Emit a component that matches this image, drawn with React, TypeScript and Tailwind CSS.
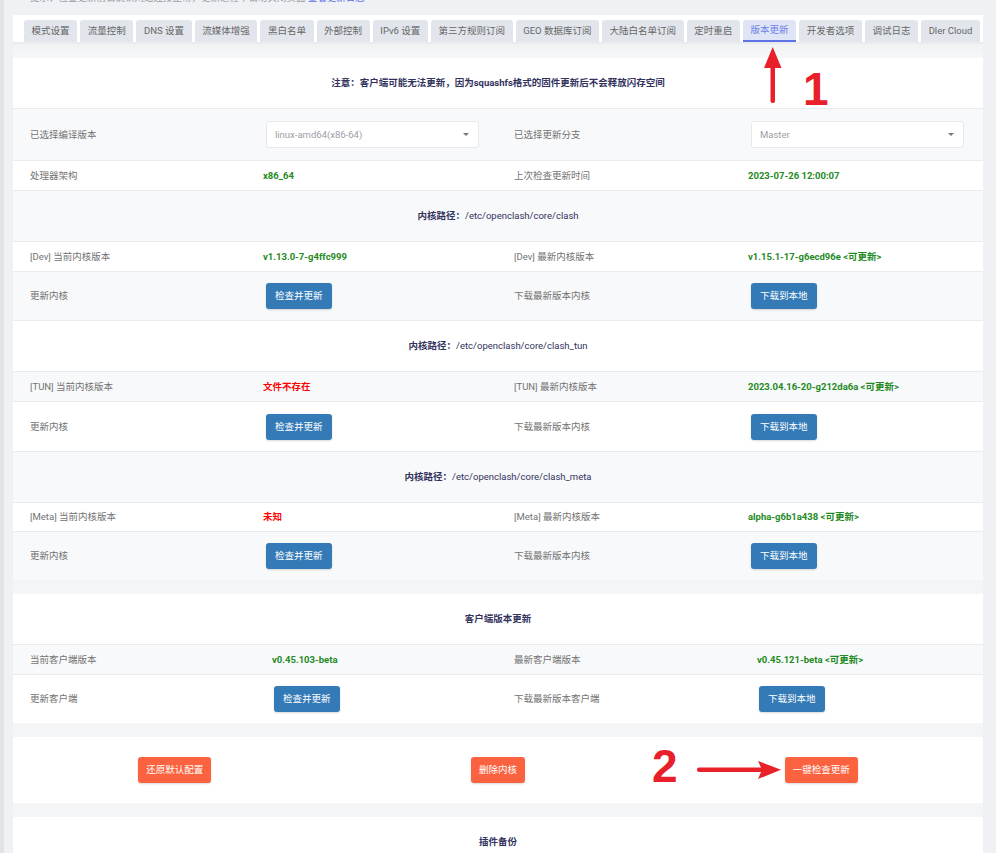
import React from "react";

const tabs = [
  "模式设置",
  "流量控制",
  "DNS 设置",
  "流媒体增强",
  "黑白名单",
  "外部控制",
  "IPv6 设置",
  "第三方规则订阅",
  "GEO 数据库订阅",
  "大陆白名单订阅",
  "定时重启",
  "版本更新",
  "开发者选项",
  "调试日志",
  "Dler Cloud",
];

const KGRID = "grid-cols-[250px_234px_251px_1fr]";
const CGRID = "grid-cols-[259px_225px_260px_1fr]";

function Label({ children }: { children: React.ReactNode }) {
  return <span className="pl-[17px] text-[#737373]">{children}</span>;
}

function Green({ children }: { children: React.ReactNode }) {
  return <span className="font-bold text-[#248a24]">{children}</span>;
}

function Red({ children }: { children: React.ReactNode }) {
  return <span className="font-bold text-[#ff0000]">{children}</span>;
}

function BlueBtn({ children, offset }: { children: React.ReactNode; offset: string }) {
  return (
    <button
      className={`${offset} h-[26px] rounded-[3px] bg-[#337ab7] px-[9px] text-white shadow-[0_1px_2px_rgba(0,0,0,0.15)]`}
    >
      {children}
    </button>
  );
}

function OrangeBtn({ children }: { children: React.ReactNode }) {
  return (
    <button className="h-[26px] rounded-[3px] bg-[#fb6340] px-[8px] text-white shadow-[0_1px_2px_rgba(0,0,0,0.15)]">
      {children}
    </button>
  );
}

function Select({ value }: { value: string }) {
  return (
    <div className="ml-[3px] flex h-[27px] w-[213px] items-center justify-between rounded-[3px] border border-[#e6e8ec] bg-white pl-[8px] pr-[9px] text-[#9aa0a8]">
      <span>{value}</span>
      <svg width="6" height="3" viewBox="0 0 6 3">
        <path d="M0 0h6L3 3z" fill="#777" />
      </svg>
    </div>
  );
}

function Row({
  gray,
  h,
  grid,
  cells,
}: {
  gray?: boolean;
  h: string;
  grid: string;
  cells: React.ReactNode[];
}) {
  return (
    <div
      className={`grid ${grid} ${h} items-center border-t border-[#e9ecef] ${
        gray ? "bg-[#f8f9fa]" : "bg-white"
      }`}
    >
      {cells.map((c, i) => (
        <div key={i} className="flex items-center">
          {c}
        </div>
      ))}
    </div>
  );
}

function Header({ gray, h, children }: { gray?: boolean; h: string; children: React.ReactNode }) {
  return (
    <div
      className={`flex ${h} items-center justify-center border-t border-[#e9ecef] text-[#32325d] ${
        gray ? "bg-[#f8f9fa]" : "bg-white"
      }`}
    >
      {children}
    </div>
  );
}

function PathHeader({ gray, path }: { gray?: boolean; path: string }) {
  return (
    <Header gray={gray} h="h-[51px]">
      <span className="font-bold">内核路径：</span>
      <span>{path}</span>
    </Header>
  );
}

export default function App() {
  return (
    <div
      className="relative min-h-[853px] overflow-hidden bg-[#eff1f4] px-[13px] text-[9.5px] leading-none"
      style={{ fontFamily: '"Roboto", "Noto Sans CJK SC", sans-serif' }}
    >
      <div className="pointer-events-none absolute left-0 top-0 h-full w-[4px] bg-[#e1e3e7]" />

      {/* top hint line, mostly scrolled out */}
      <div className="h-[15px] overflow-hidden">
        <div className="-mt-[7px] pl-[17px] text-[#9a9ea6]">
          提示：检查更新前请确认网络连接正常，更新过程中请勿关闭页面 <span className="text-[#5e72e4]">查看更新日志</span>
        </div>
      </div>

      <div className="bg-[#f4f5f7]">
        {/* tabs */}
        <div className="flex gap-[3px] overflow-hidden whitespace-nowrap bg-white pl-[11px] pt-[5px]">
          {tabs.map((t) => (
            <div
              key={t}
              className={
                t === "版本更新"
                  ? "flex h-[22px] shrink-0 items-center rounded-t-[3px] border-b-2 border-[#5e72e4] bg-[#dfe4f6] px-[7.6px] text-[#6f83e6]"
                  : "flex h-[22px] shrink-0 items-center rounded-t-[3px] bg-[#e2e6ec] px-[7.6px] text-[#666]"
              }
            >
              {t}
            </div>
          ))}
        </div>
        <div className="h-[2px] bg-[#e9ecef]" />
        <div className="h-[14px] bg-gradient-to-b from-[#f1f2f4] to-[#f6f7f9]" />

        {/* kernel section */}
        <div className="bg-white">
          <div className="flex h-[50px] items-center justify-center font-bold text-[#32325d]">
            注意：客户端可能无法更新，因为squashfs格式的固件更新后不会释放闪存空间
          </div>
          <Row
            gray
            h="h-[52px]"
            grid={KGRID}
            cells={[
              <Label>已选择编译版本</Label>,
              <Select value="linux-amd64(x86-64)" />,
              <Label>已选择更新分支</Label>,
              <Select value="Master" />,
            ]}
          />
          <Row
            h="h-[30px]"
            grid={KGRID}
            cells={[
              <Label>处理器架构</Label>,
              <Green>x86_64</Green>,
              <Label>上次检查更新时间</Label>,
              <Green>2023-07-26 12:00:07</Green>,
            ]}
          />
          <PathHeader gray path="/etc/openclash/core/clash" />
          <Row
            h="h-[30px]"
            grid={KGRID}
            cells={[
              <Label>[Dev] 当前内核版本</Label>,
              <Green>v1.13.0-7-g4ffc999</Green>,
              <Label>[Dev] 最新内核版本</Label>,
              <Green>v1.15.1-17-g6ecd96e &lt;可更新&gt;</Green>,
            ]}
          />
          <Row
            gray
            h="h-[49px]"
            grid={KGRID}
            cells={[
              <Label>更新内核</Label>,
              <BlueBtn offset="ml-[3px]">检查并更新</BlueBtn>,
              <Label>下载最新版本内核</Label>,
              <BlueBtn offset="ml-[3px]">下载到本地</BlueBtn>,
            ]}
          />
          <PathHeader path="/etc/openclash/core/clash_tun" />
          <Row
            gray
            h="h-[30px]"
            grid={KGRID}
            cells={[
              <Label>[TUN] 当前内核版本</Label>,
              <Red>文件不存在</Red>,
              <Label>[TUN] 最新内核版本</Label>,
              <Green>2023.04.16-20-g212da6a &lt;可更新&gt;</Green>,
            ]}
          />
          <Row
            h="h-[50px]"
            grid={KGRID}
            cells={[
              <Label>更新内核</Label>,
              <BlueBtn offset="ml-[3px]">检查并更新</BlueBtn>,
              <Label>下载最新版本内核</Label>,
              <BlueBtn offset="ml-[3px]">下载到本地</BlueBtn>,
            ]}
          />
          <PathHeader gray path="/etc/openclash/core/clash_meta" />
          <Row
            h="h-[29px]"
            grid={KGRID}
            cells={[
              <Label>[Meta] 当前内核版本</Label>,
              <Red>未知</Red>,
              <Label>[Meta] 最新内核版本</Label>,
              <Green>alpha-g6b1a438 &lt;可更新&gt;</Green>,
            ]}
          />
          <Row
            gray
            h="h-[49px]"
            grid={KGRID}
            cells={[
              <Label>更新内核</Label>,
              <BlueBtn offset="ml-[3px]">检查并更新</BlueBtn>,
              <Label>下载最新版本内核</Label>,
              <BlueBtn offset="ml-[3px]">下载到本地</BlueBtn>,
            ]}
          />
        </div>

        <div className="h-[14px]" />

        {/* client section */}
        <div className="bg-white">
          <div className="flex h-[50px] items-center justify-center font-bold text-[#32325d]">
            客户端版本更新
          </div>
          <Row
            gray
            h="h-[30px]"
            grid={CGRID}
            cells={[
              <Label>当前客户端版本</Label>,
              <Green>v0.45.103-beta</Green>,
              <Label>最新客户端版本</Label>,
              <Green>v0.45.121-beta &lt;可更新&gt;</Green>,
            ]}
          />
          <Row
            h="h-[49px]"
            grid={CGRID}
            cells={[
              <Label>更新客户端</Label>,
              <BlueBtn offset="ml-[2px]">检查并更新</BlueBtn>,
              <Label>下载最新版本客户端</Label>,
              <BlueBtn offset="ml-[2px]">下载到本地</BlueBtn>,
            ]}
          />
        </div>

        <div className="h-[14px]" />

        {/* actions */}
        <div className="grid h-[66px] grid-cols-3 items-center bg-white">
          <div className="flex justify-center">
            <OrangeBtn>还原默认配置</OrangeBtn>
          </div>
          <div className="flex justify-center">
            <OrangeBtn>删除内核</OrangeBtn>
          </div>
          <div className="flex justify-center">
            <OrangeBtn>一键检查更新</OrangeBtn>
          </div>
        </div>

        <div className="h-[14px]" />

        {/* plugin backup */}
        <div className="bg-white">
          <div className="flex h-[50px] items-center justify-center font-bold text-[#32325d]">插件备份</div>
          <div className="h-[40px]" />
        </div>
      </div>

      {/* annotation 1 */}
      <svg className="pointer-events-none absolute left-[760px] top-[44px]" width="26" height="62" viewBox="0 0 26 62">
        <path d="M12.7 3 L21.5 24 L4 24 Z" fill="#e8202a" />
        <rect x="10.5" y="22" width="4.5" height="37" rx="2" fill="#e8202a" />
      </svg>
      <div
        className="pointer-events-none absolute left-[803px] top-[66px] text-[46px] font-bold leading-none text-[#e8202a]"
        style={{ fontFamily: '"Liberation Sans", sans-serif' }}
      >
        1
      </div>

      {/* annotation 2 */}
      <div
        className="pointer-events-none absolute left-[652px] top-[743px] text-[46px] font-bold leading-none text-[#e8202a]"
        style={{ fontFamily: '"Liberation Sans", sans-serif' }}
      >
        2
      </div>
      <svg className="pointer-events-none absolute left-[694px] top-[758px]" width="92" height="24" viewBox="0 0 92 24">
        <rect x="3" y="9.5" width="66" height="4.5" rx="2" fill="#e8202a" />
        <path d="M87 11.7 L64 3 L68 11.7 L64 21 Z" fill="#e8202a" />
      </svg>
    </div>
  );
}
